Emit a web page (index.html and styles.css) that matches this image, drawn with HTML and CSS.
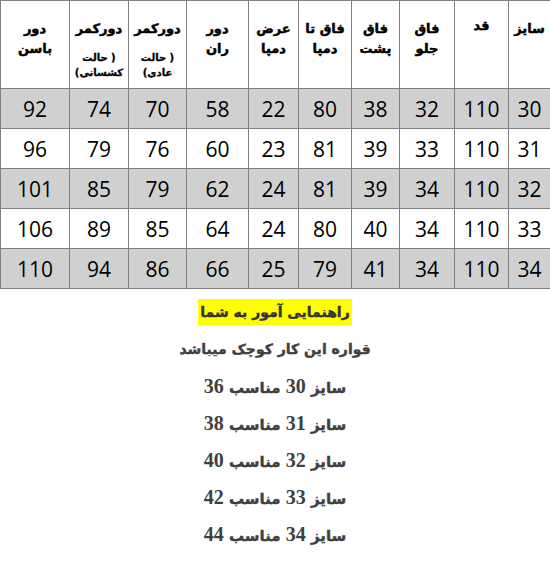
FILE: index.html
```html
<!DOCTYPE html>
<html lang="fa">
<head>
<meta charset="utf-8">
<link rel="stylesheet" href="styles.css">
</head>
<body>
<table class="sizes" dir="rtl">
  <colgroup>
    <col style="width:42px"><col style="width:54px"><col style="width:55px"><col style="width:48px"><col style="width:53px"><col style="width:50px"><col style="width:62px"><col style="width:58px"><col style="width:59px"><col style="width:69px">
  </colgroup>
  <thead>
    <tr>
      <th><div class="h">سایز</div></th>
      <th><div class="h h-top">قد</div></th>
      <th><div class="h">فاق<br>جلو</div></th>
      <th><div class="h">فاق<br>پشت</div></th>
      <th><div class="h">فاق تا<br>دمپا</div></th>
      <th><div class="h">عرض<br>دمپا</div></th>
      <th><div class="h">دور<br>ران</div></th>
      <th><div class="h">دورکمر</div><div class="sub" dir="ltr">حالت )<br>(عادی</div></th>
      <th><div class="h">دورکمر</div><div class="sub" dir="ltr">حالت )<br>(کشسانی</div></th>
      <th><div class="h">دور<br>باسن</div></th>
    </tr>
  </thead>
  <tbody>
    <tr class="shade"><td>30</td><td>110</td><td>32</td><td>38</td><td>80</td><td>22</td><td>58</td><td>70</td><td>74</td><td>92</td></tr>
    <tr><td>31</td><td>110</td><td>33</td><td>39</td><td>81</td><td>23</td><td>60</td><td>76</td><td>79</td><td>96</td></tr>
    <tr class="shade"><td>32</td><td>110</td><td>34</td><td>39</td><td>81</td><td>24</td><td>62</td><td>79</td><td>85</td><td>101</td></tr>
    <tr><td>33</td><td>110</td><td>34</td><td>40</td><td>80</td><td>24</td><td>64</td><td>85</td><td>89</td><td>106</td></tr>
    <tr class="shade"><td>34</td><td>110</td><td>34</td><td>41</td><td>79</td><td>25</td><td>66</td><td>86</td><td>94</td><td>110</td></tr>
  </tbody>
</table>
<div class="guide" dir="rtl">
  <p class="line title"><span class="mark">راهنمایی آمور به شما</span></p>
  <p class="line fit">قواره این کار کوچک میباشد</p>
  <p class="line size">سایز <span class="num">30</span> مناسب <span class="num">36</span></p>
  <p class="line size">سایز <span class="num">31</span> مناسب <span class="num">38</span></p>
  <p class="line size">سایز <span class="num">32</span> مناسب <span class="num">40</span></p>
  <p class="line size">سایز <span class="num">33</span> مناسب <span class="num">42</span></p>
  <p class="line size">سایز <span class="num">34</span> مناسب <span class="num">44</span></p>
</div>
</body>
</html>
```
FILE: styles.css
```css
html, body {
  margin: 0;
  padding: 0;
  background: #ffffff;
}
body {
  width: 550px;
  font-family: "DejaVu Sans", sans-serif;
}
.sizes {
  width: 550px;
  border-collapse: collapse;
  table-layout: fixed;
}
.sizes th, .sizes td {
  border: 1px solid #7f7f7f;
  padding: 0;
  text-align: center;
}
.sizes th {
  height: 87px;
  vertical-align: top;
  font-weight: bold;
  color: #000;
}
.h {
  font-size: 13px;
  line-height: 20px;
  padding-top: 18px;
  -webkit-text-stroke: 0.5px #000;
}
.h-top {
  padding-top: 15px;
}
.sub {
  font-size: 10px;
  line-height: 15px;
  margin-top: 11px;
  text-align: center;
  -webkit-text-stroke: 0.3px #000;
}
.sizes td {
  height: 39px;
  font-family: "Open Sans", sans-serif;
  font-size: 21px;
  color: #000;
  vertical-align: middle;
}
.shade td {
  background: #d0d0d0;
}
.guide {
  display: flex;
  flex-direction: column;
  align-items: center;
  padding-top: 5px;
}
.line {
  margin: 0;
  height: 37px;
  line-height: 37px;
  font-weight: bold;
  color: #404040;
  text-align: center;
}
.title, .fit {
  font-size: 14px;
  -webkit-text-stroke: 0.4px currentColor;
}
.mark {
  display: inline-block;
  line-height: 26px;
  background: #ffff00;
  padding: 0 2px;
  color: #333;
}
.size {
  font-size: 15px;
  -webkit-text-stroke: 0.4px currentColor;
}
.num {
  font-family: "Liberation Serif", serif;
  font-size: 20px;
  -webkit-text-stroke: 0;
}
```
